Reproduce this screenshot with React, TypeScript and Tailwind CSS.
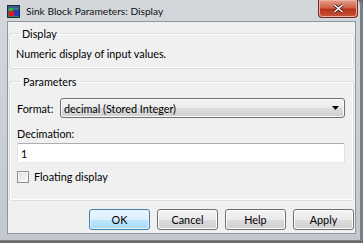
import React from "react";

function TitleIcon() {
  return (
    <svg width="13" height="13" viewBox="0 0 13 13">
      <rect x="0.5" y="0.5" width="12" height="12" fill="#2f7f6f" stroke="#1d2d3a" />
      <rect x="1" y="1" width="11" height="2" fill="#3b5b8c" />
      <rect x="6" y="5" width="6" height="6" fill="#1f3fbf" />
      <circle cx="4.5" cy="8.5" r="3" fill="#e01818" />
      <rect x="2" y="3.5" width="4" height="2" fill="#40c040" />
    </svg>
  );
}

function Btn({ label, def }: { label: string; def?: boolean }) {
  return (
    <div
      className={
        "w-[61px] h-[21px] rounded-[3px] border flex items-center justify-center text-[#000] " +
        (def
          ? "border-[#3c7fb1] bg-[linear-gradient(#eaf6fd_0%,#d9f0fc_50%,#bee6fd_51%,#a7d9f5_100%)] shadow-[inset_0_0_0_1px_#e8f4fb]"
          : "border-[#707070] bg-[linear-gradient(#f2f2f2_0%,#ebebeb_50%,#dddddd_51%,#cfcfcf_100%)] shadow-[inset_0_0_0_1px_#fcfcfc]")
      }
    >
      {label}
    </div>
  );
}

export default function App() {
  return (
    <div className="w-[363px] h-[243px] overflow-hidden bg-[#6a6a6a] font-['Lato',sans-serif] text-[10.8px] leading-[15px] text-[#000]">
      <div className="w-[363px] h-[241px] flex flex-col bg-[linear-gradient(#d4d8dd,#c3c8ce)] border-r-[3px] border-b border-[#7a7f85] rounded-tr-[6px]">
        <div className="h-[21px] flex items-start shrink-0">
          <div className="pl-[7px] pt-[4px] flex items-center">
            <TitleIcon />
            <span className="ml-[6px] text-[10.2px] leading-[14px] text-[#111]">
              Sink Block Parameters: Display
            </span>
          </div>
          <div className="ml-auto mr-[2px] w-[40px] h-[18px] rounded-b-[4px] border border-t-0 border-[#6e2a22] bg-[linear-gradient(#e4a08e_0%,#d2634a_45%,#b8321c_55%,#c8553c_100%)] flex items-center justify-center shadow-[inset_0_0_0_1px_#eab0a0]">
            <svg width="11" height="9" viewBox="0 0 11 9">
              <path d="M1.5 1 L9.5 8 M9.5 1 L1.5 8" stroke="#3a1a14" strokeWidth="3" />
              <path d="M1.5 1 L9.5 8 M9.5 1 L1.5 8" stroke="#ffffff" strokeWidth="1.6" />
            </svg>
          </div>
        </div>
        <div className="flex-1 ml-[7px] mr-[4px] mb-[6px] bg-[#f0f0f0] border border-[#8e969e] flex flex-col pl-[1px] pr-[1px]">
          <fieldset className="mt-[4px] border border-[#d5dfe5] rounded-[3px] px-[6px] pt-[5px] pb-[7px] shadow-[inset_0_0_0_1px_#ffffff]">
            <legend className="ml-[3px] px-[3px]">Display</legend>
            <div>Numeric display of input values.</div>
          </fieldset>
          <fieldset className="mt-[5px] border border-[#d5dfe5] rounded-[3px] pl-[7px] pr-[8px] pt-[9px] pb-[16px] shadow-[inset_0_0_0_1px_#ffffff]">
            <legend className="ml-[3px] px-[3px]">Parameters</legend>
            <div className="flex items-center">
              <span className="w-[43px]">Format:</span>
              <div className="flex-1 h-[20px] rounded-[3px] border border-[#707070] bg-[linear-gradient(#f2f2f2_0%,#ebebeb_50%,#dddddd_51%,#cfcfcf_100%)] flex items-center pl-[3px] pr-[5px] shadow-[inset_0_0_0_1px_#fcfcfc]">
                <span className="flex-1">decimal (Stored Integer)</span>
                <svg width="7" height="4" viewBox="0 0 7 4">
                  <path d="M0 0 H7 L3.5 4 Z" fill="#000" />
                </svg>
              </div>
            </div>
            <div className="mt-[8px]">Decimation:</div>
            <div className="mt-[2px] h-[20px] bg-white border border-[#abadb3] border-l-[#e2e3ea] border-r-[#dbdfe6] border-b-[#e3e9ef] rounded-[2px] flex items-center pl-[3px]">
              1
            </div>
            <div className="mt-[6px] flex items-center">
              <div className="w-[12px] h-[12px] border border-[#8e8f8f] bg-[linear-gradient(135deg,#dcdcdc,#fbfbfb)] shadow-[inset_0_0_0_1px_#f4f4f4]" />
              <span className="ml-[5px]">Floating display</span>
            </div>
          </fieldset>
          <div className="mt-[8px] flex justify-end gap-[7px] pr-[0px]">
            <Btn label="OK" def />
            <Btn label="Cancel" />
            <Btn label="Help" />
            <Btn label="Apply" />
          </div>
        </div>
      </div>
    </div>
  );
}
